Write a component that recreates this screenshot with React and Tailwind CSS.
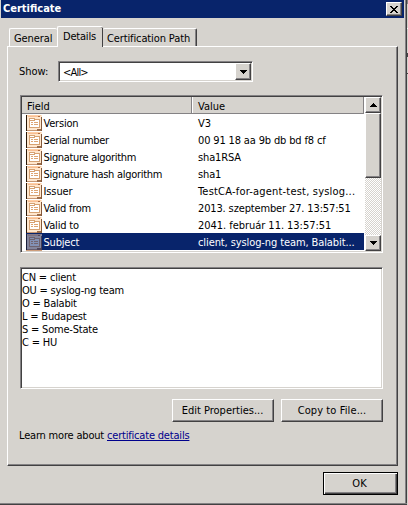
import React from "react";

const ROWS = [
  ["Version", "V3", "tracking-[-0.2px]", ""],
  ["Serial number", "00 91 18 aa 9b db bd f8 cf", "tracking-[-0.35px]", "tracking-[-0.15px]"],
  ["Signature algorithm", "sha1RSA", "tracking-[-0.32px]", "tracking-[-0.14px]"],
  ["Signature hash algorithm", "sha1", "tracking-[-0.29px]", "tracking-[-0.14px]"],
  ["Issuer", "TestCA-for-agent-test, syslog...", "tracking-[-0.1px]", "tracking-[0.2px]"],
  ["Valid from", "2013. szeptember 27. 13:57:51", "tracking-[-0.25px]", "tracking-[-0.14px]"],
  ["Valid to", "2041. február 11. 13:57:51", "tracking-[-0.2px]", "tracking-[-0.04px]"],
  ["Subject", "client, syslog-ng team, Balabit...", "tracking-[-0.2px]", "tracking-[-0.1px]"],
];

const DETAILS = ["CN = client", "OU = syslog-ng team", "O = Balabit", "L = Budapest", "S = Some-State", "C = HU"];

const RAISED = "bg-[#d6d3ce] border border-t-white border-l-white border-r-[#424142] border-b-[#424142] shadow-[inset_-1px_-1px_0_#848284]";
const SUNKEN = "border border-t-[#848284] border-l-[#848284] border-r-white border-b-white shadow-[inset_1px_1px_0_#424142,inset_-1px_-1px_0_#d6d3ce]";

function FieldIcon({ selected }) {
  return (
    <svg width="16" height="16" viewBox="0 0 16 16" shapeRendering="crispEdges" className="shrink-0">
      <rect width="16" height="16" fill="#ffe7ce" />
      <path d="M1 0h14v1H1z" fill="#ffcfa5" />
      <path d="M2 1h10v1H2z" fill="#f7be94" />
      <path d="M12 1h2v1h-2z" fill="#ad6d42" />
      <path d="M0 0h1v16H0z" fill="#291808" />
      <path d="M15 2h1v14h-1z" fill="#84593a" />
      <path d="M1 15h10v1H1z" fill="#c69673" />
      <path d="M11 14h4v2h-4z" fill="#9c6d4a" />
      <path d="M3 3h6v1h5v9H3z" fill="#d6a273" />
      <path d="M4 4h4v1H4zM4 6h9v6H4zM9 5h4v1H9z" fill="#fff" />
      <path d="M5 7h2v1H5zM5 9h2v1H5zM8 7h4v1H8zM8 9h4v1H8z" fill="#dea573" />
      {selected && <rect width="16" height="16" fill="#08246b" opacity="0.5" />}
    </svg>
  );
}

function Arrow({ up }) {
  return (
    <svg width="7" height="4" viewBox="0 0 7 4" shapeRendering="crispEdges">
      <path d={up ? "M3 0h1v1h1v1h1v1h1v1H0V3h1V2h1V1h1z" : "M0 0h7v1H6v1H5v1H4v1H3V3H2V2H1V1H0z"} />
    </svg>
  );
}

export default function App() {
  return (
    <div className="relative flex h-[505px] w-[408px] flex-col overflow-hidden bg-[#d6d3ce] font-['DejaVu_Sans_Condensed','DejaVu_Sans',sans-serif] text-[11px] leading-[13px] whitespace-nowrap text-black [font-stretch:condensed]">
      <header className="ml-px flex h-[18px] w-[403px] shrink-0 items-start justify-between bg-[#08246b] pl-[2px] pr-[2px] text-white">
        <span className="pt-[2px] font-bold">Certificate</span>
        <button className={`mt-[2px] flex h-[14px] w-4 items-center justify-center ${RAISED}`}>
          <svg width="8" height="7" viewBox="0 0 8 7" shapeRendering="crispEdges">
            <path d="M0 0h2v1h1v1h2V1h1V0h2v1H7v1H6v1H5v1h1v1h1v1h1v1H6V6H5V5H3v1H2v1H0V6h1V5h1V4h1V3H2V2H1V1H0z" />
          </svg>
        </button>
      </header>

      <nav className="ml-[9px] mt-2 flex h-5 shrink-0 items-end">
        <div className="h-[18px] w-12 rounded-t-[2px] border-l border-t border-white pl-1 pt-[3px] tracking-[-0.1px]">General</div>
        <div className="relative z-10 -mb-px h-[21px] w-[46px] rounded-t-[2px] border-l border-t border-white bg-[#d6d3ce] pl-[5px] pt-[3px] tracking-[-0.2px] shadow-[inset_-1px_0_0_#424142]">Details</div>
        <div className="h-[18px] w-[94px] rounded-t-[2px] border-r border-t border-r-[#424142] border-t-white pl-1 pt-[3px] tracking-[-0.12px] shadow-[inset_-1px_0_0_#848284]">Certification Path</div>
      </nav>

      <main className={`ml-[7px] flex h-[420px] w-[391px] shrink-0 flex-col pl-3 ${RAISED}`}>
        <div className="-ml-px mt-[14px] flex h-[21px] items-center">
          <span className="w-[39px] pb-px">Show:</span>
          <div className={`flex h-[21px] w-[195px] items-center justify-between bg-white p-px pl-1 ${SUNKEN}`}>
            <span className="pt-px tracking-[-0.8px]">&lt;All&gt;</span>
            <button className={`flex h-[17px] w-4 items-center justify-center ${RAISED}`}><Arrow /></button>
          </div>
        </div>

        <section className={`mt-[13px] flex h-[158px] w-[363px] bg-white p-px ${SUNKEN}`}>
          <div className="w-[343px] overflow-hidden">
            <div className="flex h-[17px] w-[342px] border-b border-[#848284] bg-[#d6d3ce] shadow-[inset_-1px_0_0_#848284]">
              <span className="w-[170px] border-r border-[#848284] pl-[5px] pt-[3px]">Field</span>
              <span className="flex-1 border-l border-white pl-[5px] pt-[3px]">Value</span>
            </div>
            {ROWS.map(([field, value, fieldFit, valueFit], i) => (
              <div key={field} className={`ml-1 flex h-[17px] w-[338px] items-center ${i === 7 ? "bg-[#08246b] text-white" : ""}`}>
                <FieldIcon selected={i === 7} />
                <span className={`w-[156px] shrink-0 pl-[1.5px] pt-[2px] ${fieldFit}`}>{field}</span>
                <span className={`pt-[2px] ${valueFit}`}>{value}</span>
              </div>
            ))}
            <div className="ml-1 h-px w-4 bg-[#ce9e7b]" />
          </div>
          <div className="flex flex-1 flex-col bg-[repeating-conic-gradient(#d6d3ce_0_25%,#fff_0_50%)] bg-[length:2px_2px]">
            <button className={`flex h-4 shrink-0 items-center justify-center ${RAISED}`}><Arrow up /></button>
            <div className={`h-[65px] ${RAISED}`} />
            <button className={`mt-auto flex h-4 shrink-0 items-center justify-center ${RAISED}`}><Arrow /></button>
          </div>
        </section>

        <section className={`mt-[14px] h-[122px] w-[363px] bg-white pl-px pt-[3px] tracking-[-0.2px] ${SUNKEN}`}>
          {DETAILS.map((line) => <div key={line}>{line}</div>)}
        </section>

        <div className="ml-[152px] mt-[10px] flex gap-[7px]">
          <button className={`h-[23px] w-[102px] pb-px pr-px ${RAISED}`}>Edit Properties...</button>
          <button className={`h-[23px] w-[102px] pb-px tracking-[0.1px] ${RAISED}`}>Copy to File...</button>
        </div>
        <p className="-ml-px mt-[7px] tracking-[-0.19px]">Learn more about <a className="text-[#00008c] underline">certificate details</a></p>
      </main>

      <button className="ml-[323px] mt-[6px] h-[23px] w-[75px] shrink-0 border border-black pr-[2px] shadow-[inset_1px_1px_0_white,inset_-1px_-1px_0_#424142,inset_-2px_-2px_0_#848284]">OK</button>
      <div className="absolute inset-y-0 right-px w-[2px] border-l border-[#848284] bg-[#424142]" />
      <div className="absolute right-0 top-0 flex h-[90px] w-px flex-col bg-[#d6d3ce]">
        <i className="h-1 bg-[#848284]" />
        <i className="mt-6 h-px bg-white" />
        <i className="mt-6 h-1 bg-[#424142]" />
        <i className="mt-4 h-px bg-[#424142]" />
      </div>
      <div className="absolute bottom-0 left-0 h-[2px] w-[407px] border-t border-[#848284] bg-[#424142]" />
    </div>
  );
}
